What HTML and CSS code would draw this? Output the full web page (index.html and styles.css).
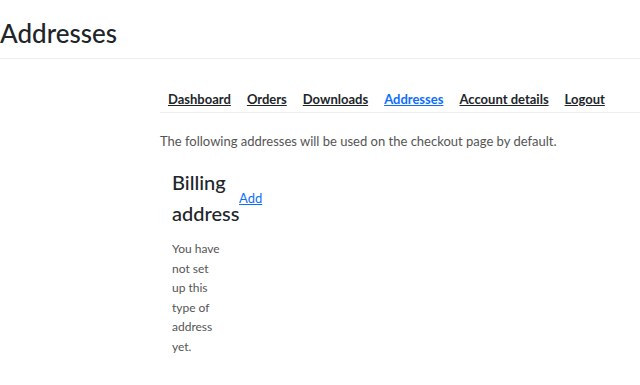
FILE: index.html
```html
<html>

<head>
  <meta charset="UTF-8" />
  <title>Addresses</title>
  <link rel="stylesheet" href="styles.css">
</head>

<body>
  <header class="page-header">
    <h1 class="page-title">Addresses</h1>
  </header>

  <div class="account">
    <div class="account-side"></div>
    <div class="account-main">
      <nav class="account-nav">
        <a href="#">Dashboard</a>
        <a href="#">Orders</a>
        <a href="#">Downloads</a>
        <a href="#" class="active">Addresses</a>
        <a href="#">Account details</a>
        <a href="#">Logout</a>
      </nav>

      <p class="intro">The following addresses will be used on the checkout page by default.</p>

      <div class="addresses">
        <div class="address-col">
          <div class="address-head">
            <h3>Billing address</h3>
            <a href="#" class="edit">Add</a>
          </div>
          <p class="address-empty">You have not set up this type of address yet.</p>
        </div>
      </div>
    </div>
  </div>
</body>

</html>
```

FILE: styles.css
```css
* {
  margin: 0;
  padding: 0;
  box-sizing: border-box;
}

html,
body {
  width: 100%;
  height: 100%;
  background-color: #fff;
  font-family: Lato, "Noto Sans", sans-serif;
  color: #212529;
}

.page-header {
  border-bottom: 1px solid #eee;
  padding: 18px 0 10px;
}

.page-title {
  font-size: 26px;
  font-weight: 500;
  line-height: 30px;
  color: #212529;
}

.account {
  display: flex;
}

.account-side {
  width: 160px;
  flex-shrink: 0;
}

.account-main {
  flex: 1;
}

.account-nav {
  display: flex;
  padding: 30px 0 3px;
  border-bottom: 1px solid #eee;
}

.account-nav a {
  padding: 0 8px;
  font-size: 13px;
  line-height: 20px;
  color: #212529;
  font-weight: 700;
  white-space: nowrap;
}

.account-nav a.active {
  color: #0d6efd;
}

.intro {
  margin-top: 18px;
  font-size: 13px;
  line-height: 20px;
  color: #555;
}

.addresses {
  display: flex;
  padding: 16px 12px;
}

.address-head {
  display: flex;
  align-items: center;
}

.address-head h3 {
  width: 67px;
  font-size: 20px;
  font-weight: 500;
  line-height: 31px;
}

.edit {
  font-size: 13px;
  color: #0d6efd;
}

.address-empty {
  width: 50px;
  margin-top: 10px;
  font-size: 12px;
  line-height: 19.5px;
  color: #555;
}
```
